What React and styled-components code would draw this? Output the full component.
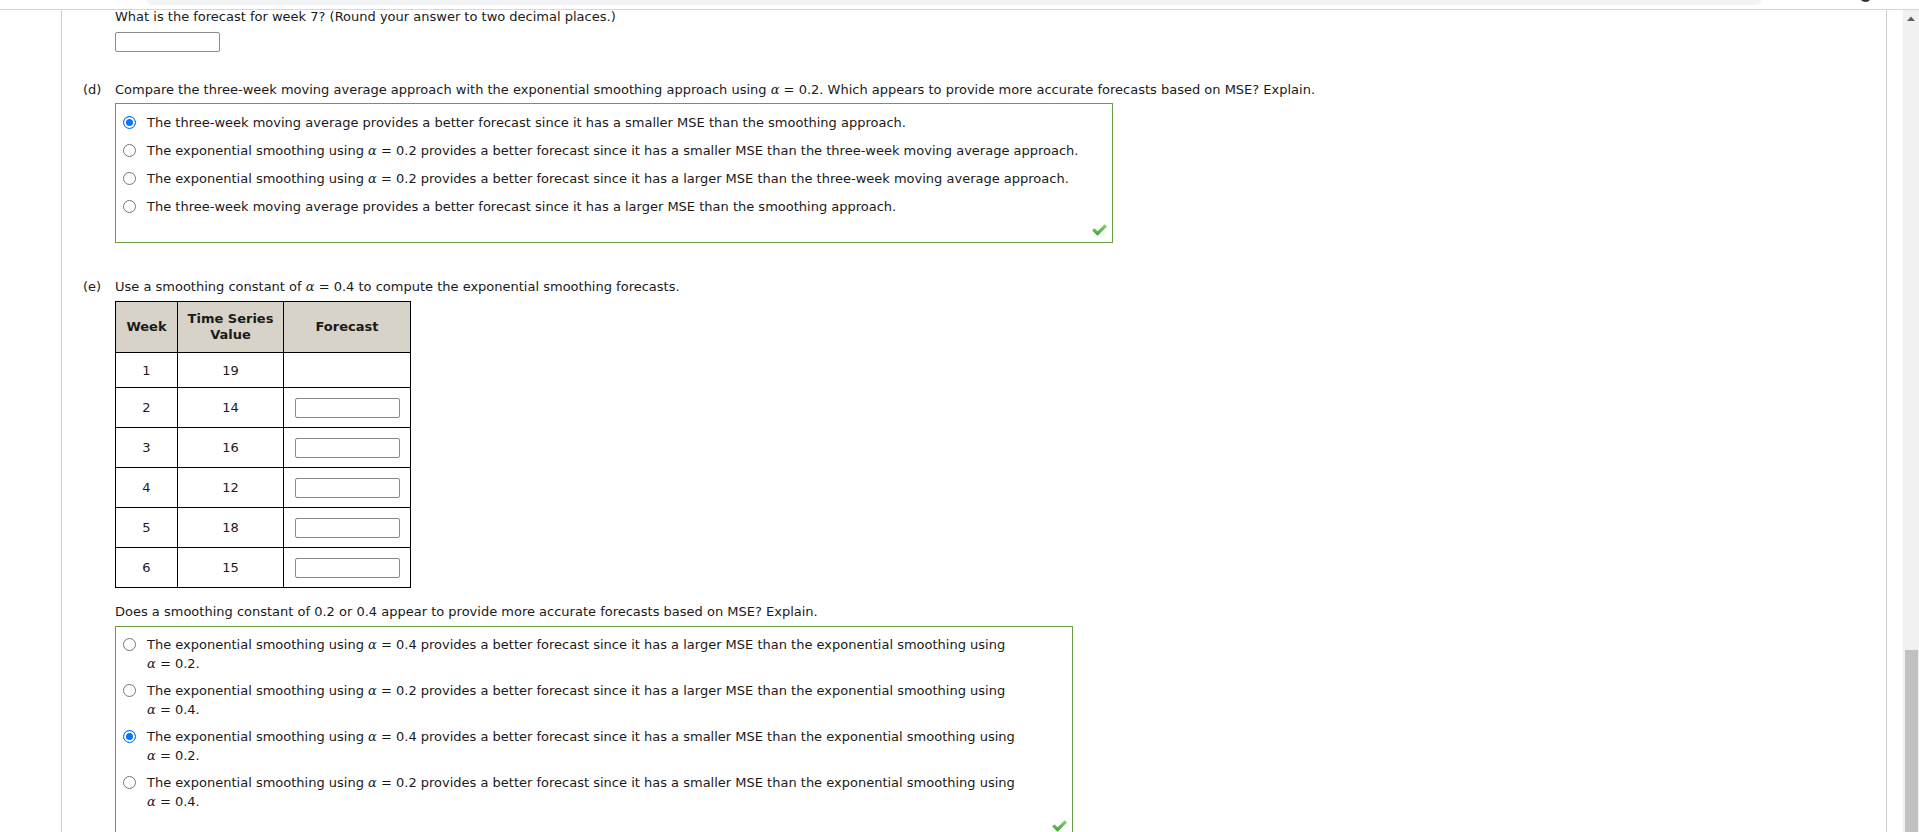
import React from 'react'
import styled, { createGlobalStyle } from 'styled-components'

const GlobalStyle = createGlobalStyle`
   html, body {
      margin: 0;
      padding: 0;
      overflow: hidden;
      background: #ffffff;
   }
   body {
      font-family: 'DejaVu Sans', Verdana, sans-serif;
      font-size: 13px;
      color: #1a1a1a;
   }
`

const getPartD = () => [
   { id: 1, checked: true, text: <>The three-week moving average provides a better forecast since it has a smaller MSE than the smoothing approach.</> },
   { id: 2, text: <>The exponential smoothing using <Var>α</Var> = 0.2 provides a better forecast since it has a smaller MSE than the three-week moving average approach.</> },
   { id: 3, text: <>The exponential smoothing using <Var>α</Var> = 0.2 provides a better forecast since it has a larger MSE than the three-week moving average approach.</> },
   { id: 4, text: <>The three-week moving average provides a better forecast since it has a larger MSE than the smoothing approach.</> },
]

const getPartE = () => [
   { id: 1, text: <>The exponential smoothing using <Var>α</Var> = 0.4 provides a better forecast since it has a larger MSE than the exponential smoothing using<br /><Var>α</Var> = 0.2.</> },
   { id: 2, text: <>The exponential smoothing using <Var>α</Var> = 0.2 provides a better forecast since it has a larger MSE than the exponential smoothing using<br /><Var>α</Var> = 0.4.</> },
   { id: 3, checked: true, text: <>The exponential smoothing using <Var>α</Var> = 0.4 provides a better forecast since it has a smaller MSE than the exponential smoothing using<br /><Var>α</Var> = 0.2.</> },
   { id: 4, text: <>The exponential smoothing using <Var>α</Var> = 0.2 provides a better forecast since it has a smaller MSE than the exponential smoothing using<br /><Var>α</Var> = 0.4.</> },
]

const series = [
   { week: 1, value: 19 },
   { week: 2, value: 14 },
   { week: 3, value: 16 },
   { week: 4, value: 12 },
   { week: 5, value: 18 },
   { week: 6, value: 15 },
]

const CheckIcon = () => (
   <svg width="15" height="12" viewBox="0 0 15 12">
      <defs>
         <linearGradient id="chk" x1="0" y1="0" x2="0" y2="1">
            <stop offset="0" stopColor="#8fd47a" />
            <stop offset="1" stopColor="#3f9a3c" />
         </linearGradient>
      </defs>
      <polygon points="0,6.6 2.4,4.3 5.6,7.3 12.6,0.2 15,2.6 5.6,11.8" fill="url(#chk)" />
   </svg>
)

const ChoiceList = ({ items, width, gap }) => (
   <ChoiceBox $width={width}>
      <Options $gap={gap}>
         {items.map((item) => (
            <Option key={item.id}>
               <RadioMark $checked={item.checked} />
               <OptionText>{item.text}</OptionText>
            </Option>
         ))}
      </Options>
      <CheckRow>
         <CheckIcon />
      </CheckRow>
   </ChoiceBox>
)

const App = () => {
   return (
      <Page>
         <GlobalStyle />
         <TopStrip>
            <AddressBar />
            <AvatarDot />
         </TopStrip>
         <Main>
            <Gutter />
            <Panel>
               <Part>
                  <PartLabel />
                  <PartBody>
                     <Prompt>What is the forecast for week 7? (Round your answer to two decimal places.)</Prompt>
                     <AnswerInput type="text" $top={6} />
                  </PartBody>
               </Part>

               <Part $top={27.5}>
                  <PartLabel>(d)</PartLabel>
                  <PartBody>
                     <Prompt>
                        Compare the three-week moving average approach with the exponential smoothing approach using <Var>α</Var> = 0.2. Which appears to provide more accurate forecasts based on MSE? Explain.
                     </Prompt>
                     <ChoiceList items={getPartD()} width={998} gap={9} />
                  </PartBody>
               </Part>

               <Part $top={33.5}>
                  <PartLabel>(e)</PartLabel>
                  <PartBody>
                     <Prompt>
                        Use a smoothing constant of <Var>α</Var> = 0.4 to compute the exponential smoothing forecasts.
                     </Prompt>
                     <SeriesTable>
                        <colgroup>
                           <col style={{ width: 62 }} />
                           <col style={{ width: 106 }} />
                           <col style={{ width: 127 }} />
                        </colgroup>
                        <thead>
                           <HeadRow>
                              <HeadCell>Week</HeadCell>
                              <HeadCell>Time Series<br />Value</HeadCell>
                              <HeadCell>Forecast</HeadCell>
                           </HeadRow>
                        </thead>
                        <tbody>
                           {series.map((row) => (
                              <BodyRow key={row.week} $first={row.week === 1}>
                                 <Cell>{row.week}</Cell>
                                 <Cell>{row.value}</Cell>
                                 <Cell>{row.week > 1 && <AnswerInput type="text" />}</Cell>
                              </BodyRow>
                           ))}
                        </tbody>
                     </SeriesTable>
                     <Prompt $top={14}>
                        Does a smoothing constant of 0.2 or 0.4 appear to provide more accurate forecasts based on MSE? Explain.
                     </Prompt>
                     <ChoiceList items={getPartE()} width={958} gap={8} />
                  </PartBody>
               </Part>
            </Panel>
            <Divider />
            <Scrollbar>
               <ScrollArrow>
                  <svg width="8" height="5" viewBox="0 0 8 5">
                     <polygon points="0,5 4,0.5 8,5" fill="#5f5f5f" />
                  </svg>
               </ScrollArrow>
               <ScrollThumb />
            </Scrollbar>
         </Main>
      </Page>
   )
}

const Page = styled('div')({
   display: 'flex',
   flexDirection: 'column',
   height: '832px',
   overflow: 'hidden',
})

const TopStrip = styled('div')({
   position: 'relative',
   display: 'flex',
   height: '9px',
   flexShrink: '0',
   padding: '0 158px 0 147px',
   borderBottom: '1px solid #d6d6d6',
})

const AddressBar = styled('div')({
   flex: '1',
   height: '5px',
   background: '#f1f3f4',
   borderRadius: '0 0 6px 6px',
})

const AvatarDot = styled('div')({
   position: 'absolute',
   top: '-11px',
   right: '47px',
   width: '13px',
   height: '13px',
   borderRadius: '50%',
   background: '#2b2f33',
})

const Main = styled('div')({
   display: 'flex',
   flex: '1',
   minHeight: '0',
})

const Gutter = styled('div')({
   width: '61px',
   flexShrink: '0',
})

const Panel = styled('div')({
   flex: '1',
   borderLeft: '1px solid #cfcfcf',
   borderRight: '1px solid #cfcfcf',
   paddingLeft: '21px',
   overflow: 'hidden',
   '& > :first-child': { marginTop: '-3px' },
})

const Divider = styled('div')({
   width: '16px',
   flexShrink: '0',
})

const Scrollbar = styled('div')({
   display: 'flex',
   flexDirection: 'column',
   justifyContent: 'space-between',
   width: '16px',
   flexShrink: '0',
   background: '#f1f1f1',
})

const ScrollArrow = styled('div')({
   display: 'flex',
   justifyContent: 'center',
   paddingTop: '6px',
   height: '11px',
})

const ScrollThumb = styled('div')({
   height: '182px',
   margin: '0 1px 0 2px',
   background: '#c1c1c1',
})

const Part = styled('div')((p) => ({
   display: 'grid',
   gridTemplateColumns: '32px 1fr',
   marginTop: `${p.$top || 0}px`,
}))

const PartLabel = styled('div')({
   lineHeight: '19px',
})

const PartBody = styled('div')({
   display: 'flex',
   flexDirection: 'column',
   alignItems: 'flex-start',
})

const Prompt = styled('div')((p) => ({
   lineHeight: '19px',
   whiteSpace: 'nowrap',
   marginTop: `${p.$top || 0}px`,
}))

const Var = styled('i')({
   fontFamily: "'DejaVu Serif', 'Liberation Serif', serif",
   fontStyle: 'italic',
   fontSize: '13px',
})

const AnswerInput = styled('input')((p) => ({
   display: 'block',
   boxSizing: 'border-box',
   width: '105px',
   height: '20px',
   margin: `${p.$top || 0}px auto 0 0`,
   padding: '0',
   border: '1px solid #8a8a8a',
   borderRadius: '2px',
   background: '#fff',
   'td &': { margin: '0 auto' },
}))

const ChoiceBox = styled('div')((p) => ({
   boxSizing: 'border-box',
   width: `${p.$width}px`,
   marginTop: '4.5px',
   padding: '8.5px 5px 6px 7px',
   border: '1px solid #6a9e42',
}))

const Options = styled('div')((p) => ({
   display: 'flex',
   flexDirection: 'column',
   gap: `${p.$gap}px`,
}))

const Option = styled('div')({
   display: 'flex',
   alignItems: 'flex-start',
   gap: '11px',
})

const RadioMark = styled('span')((p) => ({
   boxSizing: 'border-box',
   flexShrink: '0',
   width: '13px',
   height: '13px',
   marginTop: '3px',
   borderRadius: '50%',
   border: p.$checked ? '1.5px solid #0075ff' : '1px solid #767676',
   background: p.$checked ? '#0075ff' : '#fff',
   boxShadow: p.$checked ? 'inset 0 0 0 2px #fff' : 'none',
}))

const OptionText = styled('div')({
   lineHeight: '19px',
   whiteSpace: 'nowrap',
})

const CheckRow = styled('div')({
   display: 'flex',
   justifyContent: 'flex-end',
   height: '12px',
   marginTop: '8.5px',
})

const SeriesTable = styled('table')({
   marginTop: '5.5px',
   width: '296px',
   tableLayout: 'fixed',
   borderCollapse: 'collapse',
   '& th, & td': {
      border: '1px solid #000',
      padding: '0',
      textAlign: 'center',
   },
})

const HeadRow = styled('tr')({
   height: '51px',
   background: '#d7d3c8',
})

const HeadCell = styled('th')({
   fontWeight: 'bold',
   fontSize: '13px',
   lineHeight: '16px',
   color: '#1a1a1a',
})

const BodyRow = styled('tr')((p) => ({
   height: p.$first ? '35px' : '40px',
}))

const Cell = styled('td')({
   fontSize: '13px',
})

export default App
